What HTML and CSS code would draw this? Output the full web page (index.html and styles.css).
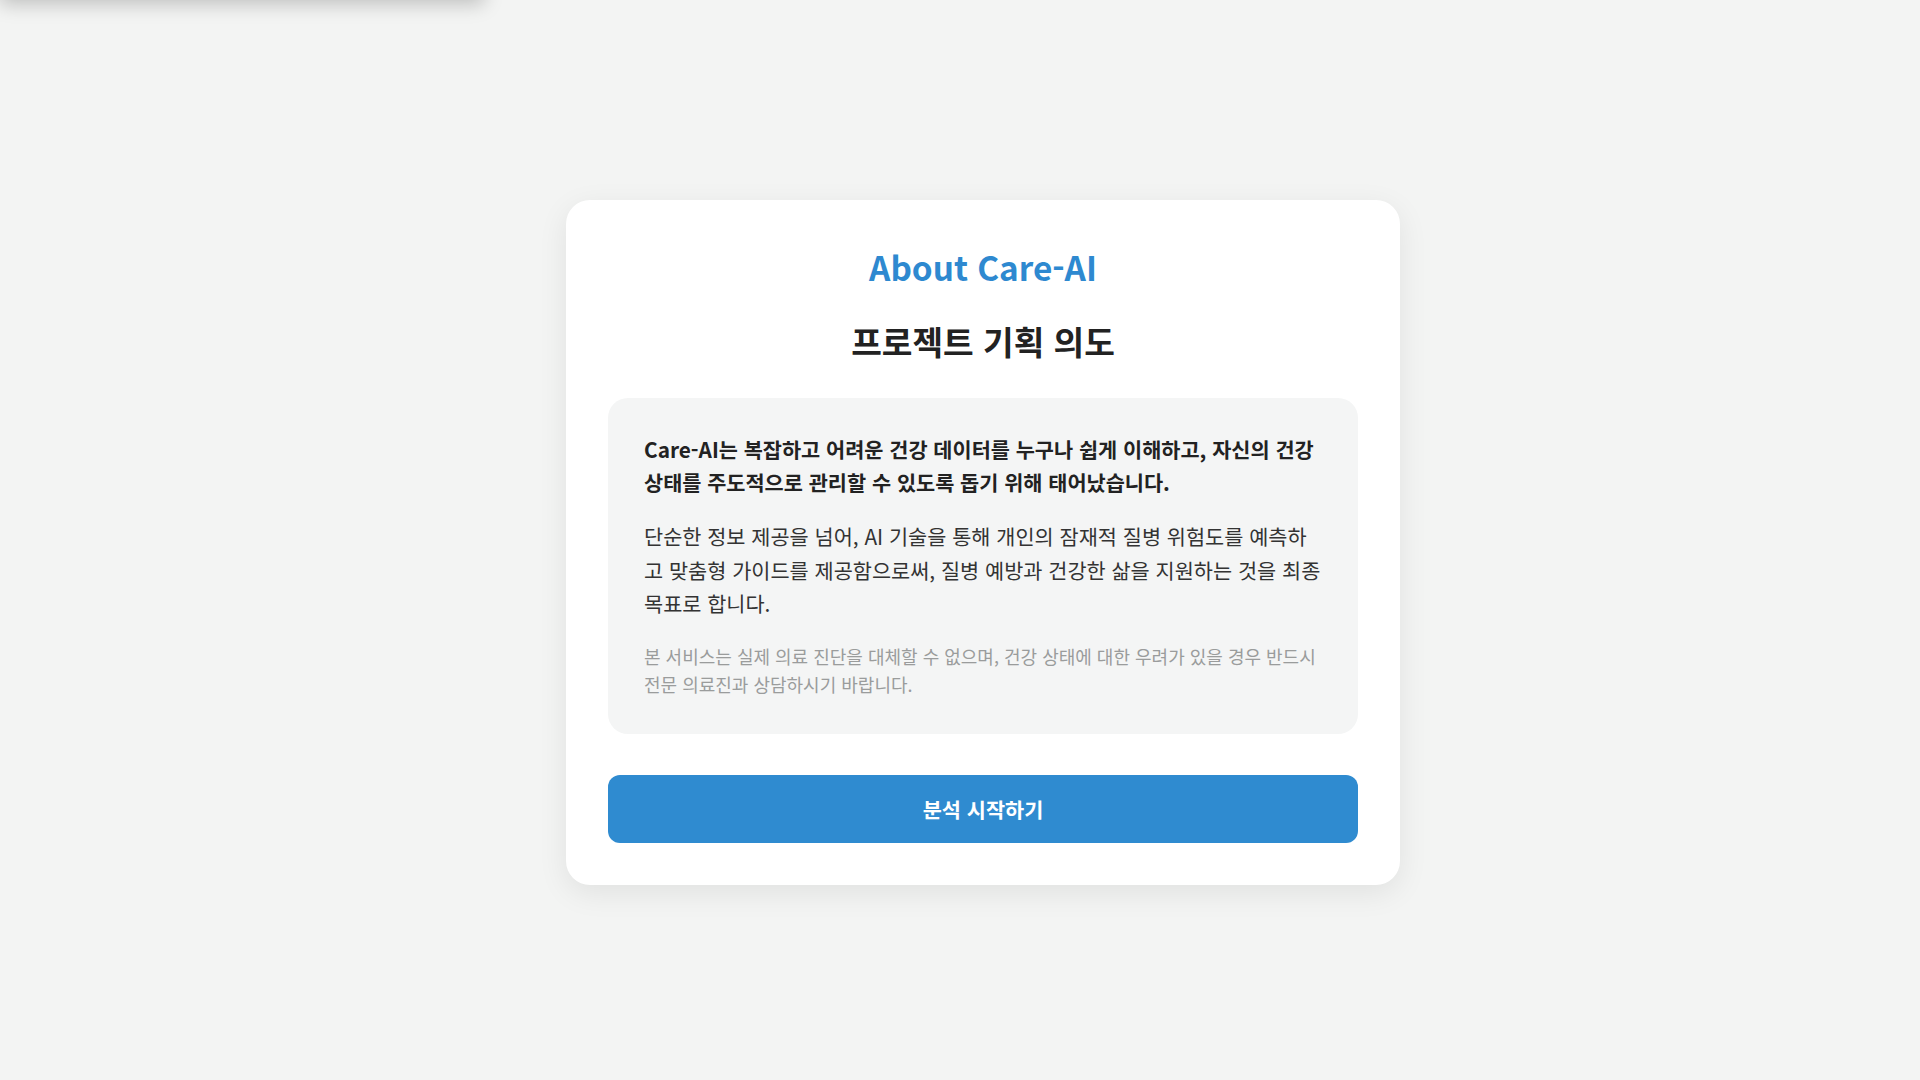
FILE: index.html
```html
<!DOCTYPE html>
<html lang="ko">
<head>
<meta charset="utf-8">
<title>About Care-AI</title>
<link rel="stylesheet" href="styles.css">
</head>
<body>
<div class="ghost-panel"></div>
<main class="page">
  <section class="card">
    <h1 class="title">About Care-AI</h1>
    <h2 class="subtitle">프로젝트 기획 의도</h2>
    <div class="info">
      <p class="lead">Care-AI는 복잡하고 어려운 건강 데이터를 누구나 쉽게 이해하고, 자신의 건강 상태를 주도적으로 관리할 수 있도록 돕기 위해 태어났습니다.</p>
      <p class="body">단순한 정보 제공을 넘어, AI 기술을 통해 개인의 잠재적 질병 위험도를 예측하고 맞춤형 가이드를 제공함으로써, 질병 예방과 건강한 삶을 지원하는 것을 최종 목표로 합니다.</p>
      <p class="note">본 서비스는 실제 의료 진단을 대체할 수 없으며, 건강 상태에 대한 우려가 있을 경우 반드시 전문 의료진과 상담하시기 바랍니다.</p>
    </div>
    <button class="start" type="button">분석 시작하기</button>
  </section>
</main>
</body>
</html>
```
FILE: styles.css
```css
* { box-sizing: border-box; }
html, body { margin: 0; padding: 0; }
body {
  background: #f3f4f3;
  font-family: "Noto Sans CJK KR", "Noto Sans", sans-serif;
  color: #222;
  overflow: hidden;
}
.ghost-panel {
  position: fixed;
  top: -60px;
  left: 0;
  width: 484px;
  height: 60px;
  background: #fff;
  box-shadow: 0 4px 18px rgba(0, 0, 0, 0.22);
}
.page {
  min-height: 100vh;
  display: flex;
  align-items: center;
  justify-content: center;
  padding: 5px 0 0 46px;
}
.card {
  width: 834px;
  background: #fff;
  border-radius: 24px;
  padding: 42px;
  box-shadow: 0 8px 30px rgba(0, 0, 0, 0.08);
  display: flex;
  flex-direction: column;
  align-items: stretch;
}
.title {
  margin: 0;
  text-align: center;
  color: #2e89d0;
  font-size: 33.3px;
  font-weight: 700;
  line-height: 50px;
}
.subtitle {
  margin: 26px 0 0;
  text-align: center;
  color: #222;
  font-size: 33.3px;
  font-weight: 700;
  line-height: 46px;
}
.info {
  margin-top: 34px;
  background: #f4f5f5;
  border-radius: 20px;
  padding: 35px 36px 36px;
}
.info p { margin: 0; }
.lead {
  font-size: 20.8px;
  font-weight: 700;
  line-height: 33px;
  color: #222;
}
.body {
  margin-top: 21px !important;
  font-size: 20.8px;
  font-weight: 400;
  line-height: 33.6px;
  color: #333;
}
.note {
  margin-top: 21px !important;
  font-size: 18px;
  line-height: 28px;
  color: #9a9c9c;
}
.start {
  margin-top: 41px;
  height: 68px;
  border: none;
  border-radius: 12px;
  background: #2f8bd0;
  color: #fff;
  font-family: "Noto Sans CJK KR", "Noto Sans", sans-serif;
  font-size: 20.8px;
  font-weight: 700;
  cursor: pointer;
}
```
